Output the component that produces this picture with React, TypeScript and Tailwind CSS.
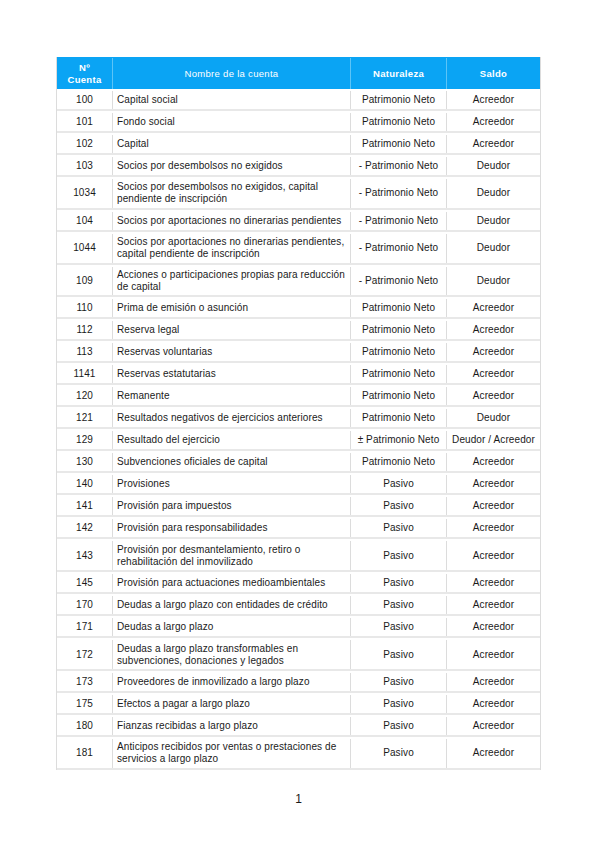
const PN = "Patrimonio Neto";
const MPN = "- Patrimonio Neto";

type Row = { code: string; name: string[]; nature: string; balance: string };

const ROWS: Row[] = [
  { code: "100", name: ["Capital social"], nature: PN, balance: "Acreedor" },
  { code: "101", name: ["Fondo social"], nature: PN, balance: "Acreedor" },
  { code: "102", name: ["Capital"], nature: PN, balance: "Acreedor" },
  { code: "103", name: ["Socios por desembolsos no exigidos"], nature: MPN, balance: "Deudor" },
  {
    code: "1034",
    name: ["Socios por desembolsos no exigidos, capital", "pendiente de inscripción"],
    nature: MPN,
    balance: "Deudor"
  },
  { code: "104", name: ["Socios por aportaciones no dinerarias pendientes"], nature: MPN, balance: "Deudor" },
  {
    code: "1044",
    name: ["Socios por aportaciones no dinerarias pendientes,", "capital pendiente de inscripción"],
    nature: MPN,
    balance: "Deudor"
  },
  {
    code: "109",
    name: ["Acciones o participaciones propias para reducción", "de capital"],
    nature: MPN,
    balance: "Deudor"
  },
  { code: "110", name: ["Prima de emisión o asunción"], nature: PN, balance: "Acreedor" },
  { code: "112", name: ["Reserva legal"], nature: PN, balance: "Acreedor" },
  { code: "113", name: ["Reservas voluntarias"], nature: PN, balance: "Acreedor" },
  { code: "1141", name: ["Reservas estatutarias"], nature: PN, balance: "Acreedor" },
  { code: "120", name: ["Remanente"], nature: PN, balance: "Acreedor" },
  { code: "121", name: ["Resultados negativos de ejercicios anteriores"], nature: PN, balance: "Deudor" },
  { code: "129", name: ["Resultado del ejercicio"], nature: "± Patrimonio Neto", balance: "Deudor / Acreedor" },
  { code: "130", name: ["Subvenciones oficiales de capital"], nature: PN, balance: "Acreedor" },
  { code: "140", name: ["Provisiones"], nature: "Pasivo", balance: "Acreedor" },
  { code: "141", name: ["Provisión para impuestos"], nature: "Pasivo", balance: "Acreedor" },
  { code: "142", name: ["Provisión para responsabilidades"], nature: "Pasivo", balance: "Acreedor" },
  {
    code: "143",
    name: ["Provisión por desmantelamiento, retiro o", "rehabilitación del inmovilizado"],
    nature: "Pasivo",
    balance: "Acreedor"
  },
  { code: "145", name: ["Provisión para actuaciones medioambientales"], nature: "Pasivo", balance: "Acreedor" },
  { code: "170", name: ["Deudas a largo plazo con entidades de crédito"], nature: "Pasivo", balance: "Acreedor" },
  { code: "171", name: ["Deudas a largo plazo"], nature: "Pasivo", balance: "Acreedor" },
  {
    code: "172",
    name: ["Deudas a largo plazo transformables en", "subvenciones, donaciones y legados"],
    nature: "Pasivo",
    balance: "Acreedor"
  },
  { code: "173", name: ["Proveedores de inmovilizado a largo plazo"], nature: "Pasivo", balance: "Acreedor" },
  { code: "175", name: ["Efectos a pagar a largo plazo"], nature: "Pasivo", balance: "Acreedor" },
  { code: "180", name: ["Fianzas recibidas a largo plazo"], nature: "Pasivo", balance: "Acreedor" },
  {
    code: "181",
    name: ["Anticipos recibidos por ventas o prestaciones de", "servicios a largo plazo"],
    nature: "Pasivo",
    balance: "Acreedor"
  }
];

const GRID = "grid grid-cols-[55px_238px_96px_94px]";

export default function App() {
  return (
    <div
      className="min-h-[848px] w-[599px] bg-white pl-[56px] pt-[57px] text-[#1a1a1a]"
      style={{ fontFamily: '"Liberation Sans", Arial, sans-serif' }}
    >
      <div className="w-[485px] border-x border-[#dcdcdc]">
        <div className={`${GRID} h-[32px] bg-[#0aa4f4] pt-[1px] text-[9.5px] leading-[12px] tracking-[0.3px] text-white`}>
          <div className="flex flex-col items-center justify-center font-bold">
            <span>Nº</span>
            <span>Cuenta</span>
          </div>
          <div className="flex items-center justify-center border-l border-[#5cc4f7]">Nombre de la cuenta</div>
          <div className="flex items-center justify-center border-l border-[#5cc4f7] font-bold">Naturaleza</div>
          <div className="flex items-center justify-center border-l border-[#5cc4f7] font-bold">Saldo</div>
        </div>

        {ROWS.map((row) => (
          <div
            key={row.code}
            className={`${GRID} ${row.name.length > 1 ? "h-[32.8px]" : "h-[22px]"} border-b-2 border-[#e8e8e8] pt-[2px] text-[10px] leading-[12px] tracking-[0.1px]`}
          >
            <div className="flex items-center justify-center">{row.code}</div>
            <div className="flex flex-col justify-center border-l border-[#dcdcdc] pl-[4px]">
              {row.name.map((line) => (
                <span key={line} className="whitespace-nowrap">
                  {line}
                </span>
              ))}
            </div>
            <div className="flex items-center justify-center whitespace-nowrap border-l border-[#dcdcdc]">
              {row.nature}
            </div>
            <div className="flex items-center justify-center whitespace-nowrap border-l border-[#dcdcdc]">
              {row.balance}
            </div>
          </div>
        ))}
      </div>

      <p className="mt-[22px] w-[485px] text-center text-[12px] leading-[14px]">1</p>
    </div>
  );
}
